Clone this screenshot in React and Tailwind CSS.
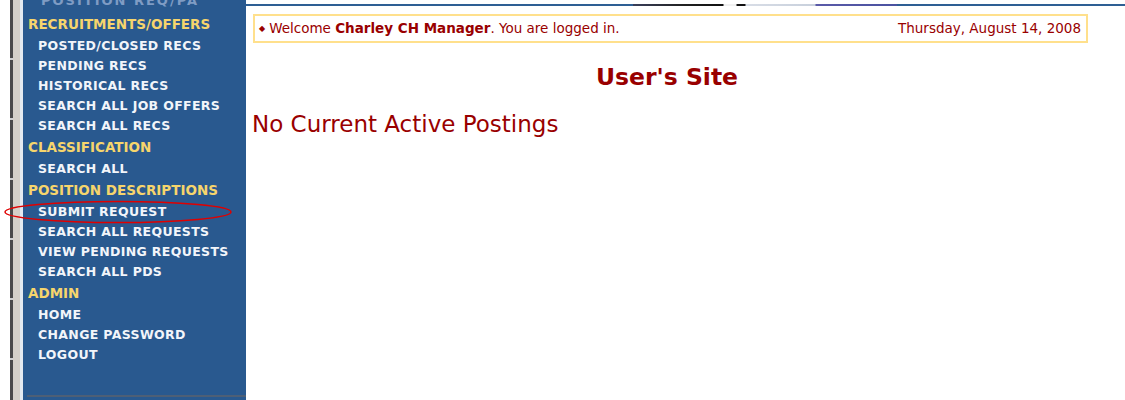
import React from 'react';

const menu = [
  {
    title: 'RECRUITMENTS/OFFERS',
    links: ['POSTED/CLOSED RECS', 'PENDING RECS', 'HISTORICAL RECS', 'SEARCH ALL JOB OFFERS', 'SEARCH ALL RECS'],
  },
  { title: 'CLASSIFICATION', links: ['SEARCH ALL'] },
  {
    title: 'POSITION DESCRIPTIONS',
    links: ['SUBMIT REQUEST', 'SEARCH ALL REQUESTS', 'VIEW PENDING REQUESTS', 'SEARCH ALL PDS'],
  },
  { title: 'ADMIN', links: ['HOME', 'CHANGE PASSWORD', 'LOGOUT'] },
];

function Sidebar() {
  return (
    <div className="w-[223px] h-full bg-[#29598f] flex flex-col font-['DejaVu_Sans',sans-serif] font-bold">
      {/* tail end of the banner above, clipped */}
      <div className="h-[13px] overflow-hidden pl-[18px]">
        <div className="-mt-[7px] text-[13px] leading-[16px] text-[#7f9cc4] tracking-[2px] whitespace-nowrap">
          POSITION REQ/PA
        </div>
      </div>
      {menu.map((group) => (
        <div key={group.title}>
          <div className="h-[23px] flex items-center pl-[5px] text-[13.5px] text-[#f6d56c] whitespace-nowrap">
            {group.title}
          </div>
          {group.links.map((link) => (
            <div
              key={link}
              className="h-[20px] flex items-center pl-[15px] text-[12.5px] tracking-[0.35px] text-[#f2f5fa] whitespace-nowrap"
            >
              {link}
            </div>
          ))}
        </div>
      ))}
      <div className="mt-auto mb-[3px] ml-[4px] h-[2px] bg-[#4d5f76]" />
    </div>
  );
}

export default function App() {
  return (
    <div className="relative w-[1125px] h-[400px] bg-white flex overflow-hidden">
      {/* window edge on the left */}
      <div className="flex h-full">
        <div className="w-[10px] bg-white" />
        <div className="w-[3px] bg-[repeating-linear-gradient(to_bottom,#4a4a4a_0px,#4a4a4a_58px,#d0d0d0_58px,#d0d0d0_60px)]" />
        <div className="w-[7px] bg-[#d4d0c8]" />
        <div className="w-[3px] bg-[#e4eaf1]" />
      </div>

      <Sidebar />

      <div className="flex-1 flex flex-col text-[#990000] font-['DejaVu_Sans',sans-serif]">
        <div className="h-[4px]" />
        <div className="h-[2px] bg-[#2e5f94] flex">
          <div className="w-[387px]" />
          <div className="w-[264px] bg-[linear-gradient(to_right,#3a3f5a_0px,#222_50px,#111_90px,#f0f0f0_91px,#f0f0f0_103px,#111_104px,#111_112px,#d8dde6_113px,#c8d0dc_182px,#5a5aa8_183px,#4a52a0_264px)]" />
        </div>

        <div className="ml-[7px] mt-[8px] w-[835px] h-[29px] border-2 border-[#ffe08c] flex items-center justify-between px-[4px] text-[13.5px]">
          <div className="flex items-center">
            <span className="text-[8px] mr-[4px]">◆</span>
            <span>
              Welcome <b>Charley CH Manager</b>. You are logged in.
            </span>
          </div>
          <span className="pr-[1px]">Thursday, August 14, 2008</span>
        </div>

        <div className="w-[842px] mt-[20px] text-center text-[23.5px] font-bold leading-[28px]">User's Site</div>

        <div className="ml-[6px] mt-[19px] text-[23px] leading-[28px]">No Current Active Postings</div>
      </div>

      {/* hand-drawn highlight around Submit Request */}
      <svg className="absolute left-[3px] top-[200px]" width="230" height="26" viewBox="0 0 230 26">
        <ellipse cx="115" cy="12" rx="113" ry="10.5" fill="none" stroke="#e00000" strokeWidth="1.5" />
      </svg>
    </div>
  );
}
